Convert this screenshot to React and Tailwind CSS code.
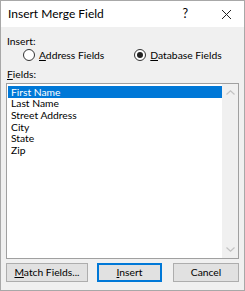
import { useState } from 'react'

const fields = ['First Name', 'Last Name', 'Street Address', 'City', 'State', 'Zip']

function Radio({ checked }) {
  return (
    <span className="w-[12px] h-[12px] rounded-full border border-[#333] bg-white flex items-center justify-center shrink-0">
      {checked && <span className="w-[6px] h-[6px] rounded-full bg-[#222]" />}
    </span>
  )
}

export default function App() {
  const [mode, setMode] = useState('database')
  const [selected, setSelected] = useState(0)

  return (
    <div
      className="w-[245px] h-[291px] bg-[#f0f0f0] border border-[#a8a8a8] text-black text-[10.3px] whitespace-nowrap overflow-hidden"
      style={{ fontFamily: 'Lato, "Noto Sans", sans-serif' }}
    >
      {/* Title bar */}
      <div className="h-[26px] bg-white flex items-center pl-[7px] pr-[12px]">
        <span className="text-[12px] leading-none">Insert Merge Field</span>
        <span className="ml-auto mr-[33px] text-[12.5px] leading-none">?</span>
        <svg width="11" height="11" viewBox="0 0 11 11" className="shrink-0">
          <path d="M1 1 L10 10 M10 1 L1 10" stroke="#222" strokeWidth="1" />
        </svg>
      </div>

      <div className="px-[5px]">
        <div className="mt-[7px] h-[14px] leading-[14px] pl-[1px]">Insert:</div>

        <div className="h-[14px] flex items-center">
          <button
            onClick={() => setMode('address')}
            className="flex items-center gap-[4px] ml-[17px] leading-[14px]"
          >
            <Radio checked={mode === 'address'} />
            <span><span className="underline">A</span>ddress Fields</span>
          </button>
          <button
            onClick={() => setMode('database')}
            className="flex items-center gap-[4px] ml-[30px] leading-[14px]"
          >
            <Radio checked={mode === 'database'} />
            <span><span className="underline">D</span>atabase Fields</span>
          </button>
        </div>

        <div className="mt-[5px] h-[14px] leading-[14px] pl-[1px]">
          <span className="underline">F</span>ields:
        </div>

        {/* List box */}
        <div className="mt-[2px] h-[176px] bg-white border border-[#a0a0a0] flex">
          <div className="flex-1 pt-[2px] pl-[1px]">
            {fields.map((f, i) => (
              <div
                key={f}
                onClick={() => setSelected(i)}
                className={`h-[11.7px] flex items-center leading-none pl-[3px] ${
                  i === selected ? 'bg-[#0078d7] text-white' : ''
                }`}
              >
                {f}
              </div>
            ))}
          </div>
          <div className="w-[16px] bg-[#f0f0f0] flex flex-col justify-between items-center py-[6px]">
            <svg width="9" height="5" viewBox="0 0 9 5">
              <path d="M0.5 4.5 L4.5 0.8 L8.5 4.5" fill="none" stroke="#c2c2c2" strokeWidth="1.2" />
            </svg>
            <svg width="9" height="5" viewBox="0 0 9 5">
              <path d="M0.5 0.5 L4.5 4.2 L8.5 0.5" fill="none" stroke="#c2c2c2" strokeWidth="1.2" />
            </svg>
          </div>
        </div>

        {/* Buttons */}
        <div className="mt-[4px] flex items-center">
          <button className="w-[82px] h-[19px] bg-[#e1e1e1] border border-[#adadad] leading-none">
            <span className="underline">M</span>atch Fields...
          </button>
          <button className="ml-[9px] w-[65px] h-[19px] bg-[#e1e1e1] border-2 border-[#0078d7] leading-none">
            <span className="underline">I</span>nsert
          </button>
          <button className="ml-auto w-[66px] h-[19px] bg-[#e1e1e1] border border-[#adadad] leading-none">
            Cancel
          </button>
        </div>
      </div>
    </div>
  )
}
